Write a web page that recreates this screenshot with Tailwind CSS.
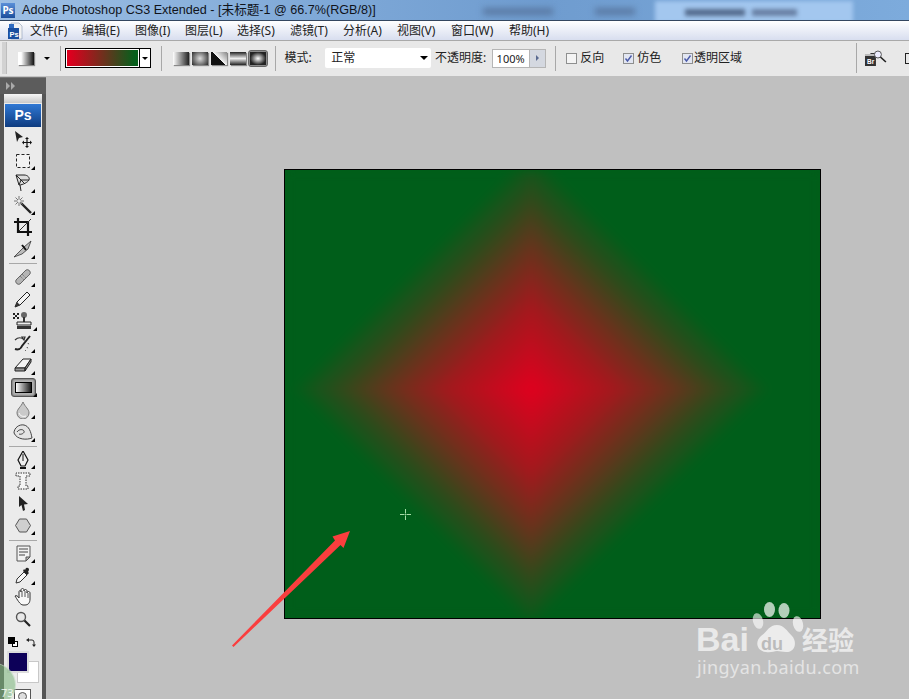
<!DOCTYPE html>
<html lang="zh">
<head>
  <meta charset="UTF-8">
  <title>Adobe Photoshop CS3 Extended</title>
  <script src="https://cdn.jsdelivr.net/npm/@tailwindcss/browser@4"></script>
</head>
<body class="relative w-[909px] h-[699px] overflow-hidden bg-[#c0c0c0] font-['Noto_Sans','Noto_Sans_CJK_SC',sans-serif] text-[12px] text-[#222]">

  <!-- title bar -->
  <div class="relative h-[20px] overflow-hidden bg-[linear-gradient(90deg,#9dbfe4,#7fa9d8_35%,#6f9ccf_60%,#7dabdc)] flex items-center">
    <div class="absolute left-[655px] top-[1px] w-[198px] h-[22px] bg-[#a3c7ef] blur-[2px]"></div>
    <div class="absolute left-[483px] top-[8px] w-[70px] h-[7px] bg-[#5a7aa4] blur-[3px]"></div>
    <div class="absolute left-[595px] top-[8px] w-[40px] h-[7px] bg-[#5a7aa4] blur-[3px]"></div>
    <div class="absolute left-[685px] top-[9px] w-[60px] h-[7px] bg-[#556c8e] blur-[2px]"></div>
    <div class="absolute left-[752px] top-[9px] w-[45px] h-[7px] bg-[#6880a4] blur-[2px]"></div>
    <div class="relative ml-[1px] w-[14px] h-[15px] bg-[linear-gradient(#5a8fd8,#1c4f9c)] text-white text-[10px] font-bold leading-[15px] text-center">Ps</div>
    <span class="relative ml-[7px] text-[12.6px] leading-[20px] text-[#10131a] whitespace-nowrap font-['Liberation_Sans','Noto_Sans_CJK_SC',sans-serif]">Adobe Photoshop CS3 Extended - [未标题-1 @ 66.7%(RGB/8)]</span>
  </div>

  <!-- menu bar -->
  <div class="h-[20px] pt-[1px] border-t border-[#33465f] bg-[linear-gradient(#ffffff,#f4f6fb_25%,#d8deef)] flex items-center">
    <svg class="ml-[6px] w-[18px] h-[18px]" viewBox="0 0 18 18">
      <path d="M5 1h8l3 3v13H5z" fill="#f2f2f2" stroke="#8a9ab5" stroke-width="0.6"/>
      <rect x="2" y="6" width="11" height="11" fill="#1b4fa0"/>
      <path d="M3 2h5v4H3z" fill="#2f6bc0"/>
      <text x="3.5" y="15" font-size="7.5" font-weight="700" fill="#fff" font-family="Liberation Sans">Ps</text>
    </svg>
    <nav class="ml-[6px] flex gap-[14px] text-[12px] whitespace-nowrap leading-[18px]">
      <span class="w-[38px]">文件(F)</span>
      <span class="w-[39px]">编辑(E)</span>
      <span class="w-[36px]">图像(I)</span>
      <span class="w-[38px]">图层(L)</span>
      <span class="w-[39px]">选择(S)</span>
      <span class="w-[39px]">滤镜(T)</span>
      <span class="w-[40px]">分析(A)</span>
      <span class="w-[40px]">视图(V)</span>
      <span class="w-[44px]">窗口(W)</span>
      <span class="w-[40px]">帮助(H)</span>
    </nav>
  </div>

  <!-- options bar -->
  <div class="relative h-[36px] pb-[1px] border-t border-[#a9a9a9] bg-[#e8e8e8] flex items-center overflow-hidden">
    <div class="ml-[2px] w-[5px] h-[32px] bg-[#d2d2d2] border-r border-[#bdbdbd]"></div>
    <div class="ml-[11px] w-[16px] h-[13px] bg-[linear-gradient(90deg,#fff,#fff_20%,#111)] shadow-[1px_1px_1px_#888]"></div>
    <div class="ml-[10px] w-0 h-0 border-x-[3px] border-x-transparent border-t-[3px] border-t-black"></div>
    <div class="ml-[10px] w-px h-[25px] bg-[#a8a8a8]"></div>

    <div class="ml-[4px] w-[86px] h-[20px] border border-black bg-white flex">
      <div class="m-px w-[71px] bg-[linear-gradient(90deg,#dc001e_5%,#065f1c_95%)]"></div>
      <div class="flex-1 border-l border-black flex items-center justify-center">
        <div class="w-0 h-0 border-x-[3px] border-x-transparent border-t-[3px] border-t-black"></div>
      </div>
    </div>
    <div class="ml-[10px] w-px h-[25px] bg-[#a8a8a8]"></div>

    <div class="ml-[11px] flex items-center gap-[3px]">
      <div class="w-[16px] h-[13px] bg-[linear-gradient(90deg,#fff,#222)] shadow-[1px_1px_1px_#888]"></div>
      <div class="w-[16px] h-[13px] bg-[radial-gradient(circle,#ddd,#2a2a2a)] shadow-[1px_1px_1px_#888]"></div>
      <div class="w-[16px] h-[13px] bg-[linear-gradient(45deg,#111_50%,#f4f4f4_50%,#888)] shadow-[1px_1px_1px_#888]"></div>
      <div class="w-[16px] h-[13px] bg-[linear-gradient(#222,#eee_50%,#222)] shadow-[1px_1px_1px_#888]"></div>
      <div class="ml-[-1px] w-[20px] h-[17px] rounded-[3px] border border-[#666] bg-[#8c8c8c] p-[1px]">
        <div class="w-full h-full bg-[radial-gradient(ellipse,#fff,#222_70%)]"></div>
      </div>
    </div>
    <div class="ml-[7px] w-px h-[25px] bg-[#a8a8a8]"></div>

    <span class="ml-[9px] w-[41px]">模式:</span>
    <div class="w-[106px] h-[20px] bg-white flex items-center justify-between pl-[6px] pr-[3px] rounded-[2px] leading-[20px]">
      <span>正常</span>
      <div class="w-0 h-0 border-x-[4px] border-x-transparent border-t-[4px] border-t-black"></div>
    </div>
    <span class="ml-[4px] w-[57px] whitespace-nowrap">不透明度:</span>
    <div class="w-[39px] h-[19px] bg-white border border-[#b5b5b5] text-[11px] leading-[18px] pl-[4px] whitespace-nowrap">100%</div>
    <div class="w-[16px] h-[19px] bg-[#d4d8e0] border border-[#b5b5b5] border-l-0 flex items-center justify-center">
      <div class="w-0 h-0 border-y-[3px] border-y-transparent border-l-[3px] border-l-[#5a6a90]"></div>
    </div>
    <div class="ml-[9px] w-px h-[25px] bg-[#a8a8a8]"></div>

    <div class="ml-[10px] w-[11px] h-[11px] border border-[#8e8f8f] bg-[#f4f4f4]"></div>
    <span class="ml-[3px] w-[43px]">反向</span>
    <div class="w-[11px] h-[11px] border border-[#8e8f8f] bg-[#e2e6f2] flex items-center justify-center">
      <svg class="w-[9px] h-[9px]" viewBox="0 0 9 9"><path d="M1.5 4.5L3.5 7L7.5 1.5" fill="none" stroke="#4a5aa8" stroke-width="1.4"/></svg>
    </div>
    <span class="ml-[3px] w-[45px]">仿色</span>
    <div class="w-[11px] h-[11px] border border-[#8e8f8f] bg-[#e2e6f2] flex items-center justify-center">
      <svg class="w-[9px] h-[9px]" viewBox="0 0 9 9"><path d="M1.5 4.5L3.5 7L7.5 1.5" fill="none" stroke="#4a5aa8" stroke-width="1.4"/></svg>
    </div>
    <span class="ml-[1px] w-[163px]">透明区域</span>
    <div class="w-px h-[30px] bg-[#a8a8a8]"></div>

    <svg class="ml-[7px] w-[23px] h-[17px]" viewBox="0 0 23 17">
      <path d="M1 4h5l1-1h5v13H1z" fill="#333"/>
      <path d="M1 4h11v2H1z" fill="#bbb"/>
      <circle cx="14" cy="4.5" r="3.5" fill="#eef" stroke="#555"/>
      <path d="M16.5 7L22 12" stroke="#222" stroke-width="1.6"/>
      <text x="3" y="14" font-size="6.5" font-weight="700" fill="#fff" font-family="Liberation Sans">Br</text>
    </svg>
    <div class="ml-[18px] w-[4px] h-[11px] border-y border-l border-[#222]"></div>
  </div>

  <!-- work area -->
  <div class="flex h-[623px]">
    <!-- tools panel -->
    <aside class="w-[46px] h-full shrink-0 bg-[#555] border-t border-[#c4c4c4] flex flex-col">
      <div class="h-[17px] border-t border-[#777] bg-[#5c5c5c] flex items-center pl-[6px] gap-px">
        <div class="w-0 h-0 border-y-[4px] border-y-transparent border-l-[4px] border-l-[#aaa]"></div>
        <div class="w-0 h-0 border-y-[4px] border-y-transparent border-l-[4px] border-l-[#aaa]"></div>
      </div>
      <div class="ml-[4px] w-[38px] flex-1 bg-[#ebebeb] flex flex-col items-center overflow-hidden">
        <div class="w-full h-[9px] bg-[linear-gradient(#f6f6f6,#c9c9c9)]"></div>
        <div class="mt-px w-[36px] h-[23px] bg-[linear-gradient(#2f78d4,#0f3c80)] text-white text-[14px] font-bold leading-[23px] text-center font-['Liberation_Sans',sans-serif]">Ps</div>

        <div class="flex flex-col items-center w-full mt-[1px]">
          <!-- move -->
          <div class="relative w-full h-[22px] flex items-center justify-center">
            <svg class="w-[20px] h-[18px]" viewBox="0 0 20 18"><path d="M2 1l8 6-4 1-2 4z" fill="#222"/><path d="M14 8v9M10 12.500h8" stroke="#111" stroke-width="1.200"/><path d="M14 7l-2 2h4zM14 18l-2-2h4zM9 12.500l2-2v4zM19 12.500l-2-2v4z" fill="#111"/></svg>
          </div>
          <!-- marquee -->
          <div class="relative w-full h-[22px] flex items-center justify-center">
            <svg class="w-[18px] h-[18px]" viewBox="0 0 18 18"><rect x="2.500" y="2.500" width="13" height="13" fill="#f2f2f2" stroke="#222" stroke-dasharray="3 2"/></svg>
            <div class="absolute right-[7px] bottom-[2px] w-[4px] h-[4px] bg-black [clip-path:polygon(100%_0,100%_100%,0_100%)]"></div>
          </div>
          <!-- lasso -->
          <div class="relative w-full h-[22px] flex items-center justify-center">
            <svg class="w-[20px] h-[20px]" viewBox="0 0 20 20"><path d="M3 2h8c4 0 6 3 5 5s-6 5-10 5z" fill="#ddd" stroke="#222"/><path d="M3 2l5 5 8 0M6 12l2-5 4 4M7 12l1 6" fill="none" stroke="#222"/></svg>
            <div class="absolute right-[7px] bottom-[1px] w-[4px] h-[4px] bg-black [clip-path:polygon(100%_0,100%_100%,0_100%)]"></div>
          </div>
          <!-- wand -->
          <div class="relative w-full h-[22px] flex items-center justify-center">
            <svg class="w-[20px] h-[20px]" viewBox="0 0 20 20"><path d="M8 8l10 10" stroke="#222" stroke-width="2.400"/><path d="M6 1v10M1 6h10M2.500 2.500l7 7M9.500 2.500l-7 7" stroke="#777"/><circle cx="6" cy="6" r="1.500" fill="#eee"/></svg>
            <div class="absolute right-[7px] bottom-[1px] w-[4px] h-[4px] bg-black [clip-path:polygon(100%_0,100%_100%,0_100%)]"></div>
          </div>
          <!-- crop -->
          <div class="relative w-full h-[22px] flex items-center justify-center">
            <svg class="w-[18px] h-[18px]" viewBox="0 0 18 18"><path d="M4 0v14h14" fill="none" stroke="#111" stroke-width="2.200"/><path d="M0 4h14v14" fill="none" stroke="#111" stroke-width="2.200"/><path d="M5 13L17 1" stroke="#333"/></svg>
          </div>
          <!-- slice -->
          <div class="relative w-full h-[22px] flex items-center justify-center">
            <svg class="w-[20px] h-[18px]" viewBox="0 0 20 18"><path d="M1 17L11 7l7-6-3 8-6 5z" fill="#bbb" stroke="#333" stroke-width="0.800"/><path d="M9 5l4 5" stroke="#111" stroke-width="2"/></svg>
            <div class="absolute right-[7px] bottom-[1px] w-[4px] h-[4px] bg-black [clip-path:polygon(100%_0,100%_100%,0_100%)]"></div>
          </div>
          <div class="mt-[3px] mb-[2px] w-[28px] h-px bg-[#a8a8a8]"></div>

          <!-- healing -->
          <div class="relative w-full h-[22px] flex items-center justify-center">
            <svg class="w-[20px] h-[20px]" viewBox="0 0 20 20"><path d="M3 13L13 3a3 3 0 0 1 4 4L7 17a3 3 0 0 1-4-4z" fill="#b4b4b4" stroke="#666"/><path d="M7 9l4 4M9 7l4 4" stroke="#666" stroke-dasharray="1 1"/></svg>
            <div class="absolute right-[7px] bottom-[1px] w-[4px] h-[4px] bg-black [clip-path:polygon(100%_0,100%_100%,0_100%)]"></div>
          </div>
          <!-- brush -->
          <div class="relative w-full h-[22px] flex items-center justify-center">
            <svg class="w-[20px] h-[20px]" viewBox="0 0 20 20"><path d="M2 18l2-5L14 3l3 3L7 16z" fill="#f4f4f4" stroke="#222"/><path d="M2 18l2-5 3 3z" fill="#333"/></svg>
            <div class="absolute right-[7px] bottom-[1px] w-[4px] h-[4px] bg-black [clip-path:polygon(100%_0,100%_100%,0_100%)]"></div>
          </div>
          <!-- stamp -->
          <div class="relative w-full h-[22px] flex items-center justify-center">
            <svg class="w-[22px] h-[20px]" viewBox="0 0 22 20"><path d="M1 2h2v2H1zM5 2h2v2H5zM3 4h2v2H3zM1 6h2v2H1zM5 6h2v2H5z" fill="#222"/><circle cx="12" cy="4" r="3" fill="#666"/><path d="M11 6h2v5h-2z" fill="#333"/><path d="M5 11h14v3H5z" fill="#eee" stroke="#222"/><path d="M5 15h14v3H5z" fill="#333"/></svg>
            <div class="absolute right-[5px] bottom-[1px] w-[4px] h-[4px] bg-black [clip-path:polygon(100%_0,100%_100%,0_100%)]"></div>
          </div>
          <!-- history brush -->
          <div class="relative w-full h-[22px] flex items-center justify-center">
            <svg class="w-[20px] h-[20px]" viewBox="0 0 20 20"><path d="M2 16c3 1 6 0 7-3l8-10" fill="none" stroke="#222" stroke-width="2"/><path d="M2 7c3-3 7-3 9 0M11 7l1-3-3 0z" fill="none" stroke="#333" stroke-width="1.200"/><path d="M15 10l1 2M14 14l1 2M12 17l1 1" stroke="#333" stroke-dasharray="1 1"/></svg>
            <div class="absolute right-[7px] bottom-[1px] w-[4px] h-[4px] bg-black [clip-path:polygon(100%_0,100%_100%,0_100%)]"></div>
          </div>
          <!-- eraser -->
          <div class="relative w-full h-[22px] flex items-center justify-center">
            <svg class="w-[20px] h-[16px]" viewBox="0 0 20 16"><path d="M2 11L10 2h8l-6 9z" fill="#f5f5f5" stroke="#222"/><path d="M2 11h10v3H2zM12 11l6-9v3l-6 9z" fill="#999" stroke="#222"/></svg>
            <div class="absolute right-[7px] bottom-[1px] w-[4px] h-[4px] bg-black [clip-path:polygon(100%_0,100%_100%,0_100%)]"></div>
          </div>
          <!-- gradient selected -->
          <div class="relative w-full h-[22px] flex items-center justify-center">
            <div class="w-[25px] h-[19px] rounded-[3px] border border-[#555] bg-[#b0b0b0] shadow-[inset_0_0_2px_#333] p-[3px]">
              <div class="w-full h-full border border-black bg-[linear-gradient(90deg,#fff,#1a1a1a)]"></div>
            </div>
            <div class="absolute right-[5px] bottom-[1px] w-[4px] h-[4px] bg-black [clip-path:polygon(100%_0,100%_100%,0_100%)]"></div>
          </div>
          <!-- blur drop -->
          <div class="relative w-full h-[23px] flex items-center justify-center">
            <svg class="w-[14px] h-[18px]" viewBox="0 0 14 18"><path d="M7 1c2 5 6 7 6 11a6 6 0 0 1-12 0c0-4 4-6 6-11z" fill="#c9c9c9" stroke="#777"/><path d="M3 12c1 3 4 4 7 3" stroke="#fff" fill="none"/></svg>
            <div class="absolute right-[7px] bottom-[2px] w-[4px] h-[4px] bg-black [clip-path:polygon(100%_0,100%_100%,0_100%)]"></div>
          </div>
          <!-- smudge -->
          <div class="relative w-full h-[22px] flex items-center justify-center">
            <svg class="w-[20px] h-[18px]" viewBox="0 0 20 18"><path d="M1 10c0-5 5-9 10-8s7 7 8 13c-5 2-15 2-18-5z" fill="#e4e4e4" stroke="#444"/><path d="M4 9c2-3 6-3 7-1s-3 4-5 3" fill="none" stroke="#444"/></svg>
            <div class="absolute right-[7px] bottom-[1px] w-[4px] h-[4px] bg-black [clip-path:polygon(100%_0,100%_100%,0_100%)]"></div>
          </div>
          <div class="mt-[3px] mb-[2px] w-[28px] h-px bg-[#a8a8a8]"></div>

          <!-- pen -->
          <div class="relative w-full h-[21px] flex items-center justify-center">
            <svg class="w-[14px] h-[18px]" viewBox="0 0 14 18"><path d="M7 0l5 9-3 6H5L2 9z" fill="#eee" stroke="#111" stroke-width="1.200"/><path d="M7 3v7" stroke="#111"/><path d="M4 16h6v2H4z" fill="#111"/></svg>
            <div class="absolute right-[7px] bottom-[1px] w-[4px] h-[4px] bg-black [clip-path:polygon(100%_0,100%_100%,0_100%)]"></div>
          </div>
          <!-- type -->
          <div class="relative w-full h-[22px] flex items-center justify-center">
            <svg class="w-[16px] h-[18px]" viewBox="0 0 16 18"><path d="M1 4V1h14v3h-4v10h2v3H3v-3h2V4z" fill="#f4f4f4" stroke="#333" stroke-dasharray="1.500 1"/></svg>
            <div class="absolute right-[7px] bottom-[1px] w-[4px] h-[4px] bg-black [clip-path:polygon(100%_0,100%_100%,0_100%)]"></div>
          </div>
          <!-- path select -->
          <div class="relative w-full h-[22px] flex items-center justify-center">
            <svg class="w-[12px] h-[16px]" viewBox="0 0 12 16"><path d="M2 1l9 8-4 .5L8 15l-2 1-1.500-6L2 12z" fill="#222"/></svg>
            <div class="absolute right-[7px] bottom-[1px] w-[4px] h-[4px] bg-black [clip-path:polygon(100%_0,100%_100%,0_100%)]"></div>
          </div>
          <!-- shape -->
          <div class="relative w-full h-[22px] flex items-center justify-center">
            <svg class="w-[16px] h-[15px]" viewBox="0 0 16 15"><path d="M4.500 1h7l4 6.500-4 6.500h-7l-4-6.500z" fill="#cfcfcf" stroke="#555"/></svg>
            <div class="absolute right-[7px] bottom-[1px] w-[4px] h-[4px] bg-black [clip-path:polygon(100%_0,100%_100%,0_100%)]"></div>
          </div>
          <div class="mt-[4px] mb-[1px] w-[28px] h-px bg-[#a8a8a8]"></div>

          <!-- notes -->
          <div class="relative w-full h-[22px] flex items-center justify-center">
            <svg class="w-[15px] h-[17px]" viewBox="0 0 15 17"><path d="M1 1h13v11l-4 4H1z" fill="#f2f2f2" stroke="#555"/><path d="M3 4h9M3 7h9M3 10h6" stroke="#444"/><path d="M10 16v-4h4z" fill="#bbb" stroke="#555"/></svg>
            <div class="absolute right-[7px] bottom-[1px] w-[4px] h-[4px] bg-black [clip-path:polygon(100%_0,100%_100%,0_100%)]"></div>
          </div>
          <!-- eyedropper -->
          <div class="relative w-full h-[22px] flex items-center justify-center">
            <svg class="w-[16px] h-[18px]" viewBox="0 0 16 18"><path d="M1 17l1-4 7-7 3 3-7 7z" fill="#f6f6f6" stroke="#333"/><path d="M8 5l4 4 2-2-1-1 1-2a2 2 0 0 0-3-2l-1 2-1-1z" fill="#222"/></svg>
            <div class="absolute right-[7px] bottom-[1px] w-[4px] h-[4px] bg-black [clip-path:polygon(100%_0,100%_100%,0_100%)]"></div>
          </div>
          <!-- hand -->
          <div class="relative w-full h-[22px] flex items-center justify-center">
            <svg class="w-[18px] h-[18px]" viewBox="0 0 18 18"><path d="M1 8c1-1 3 0 4 2V4c0-2 2-2 2 0V2c0-2 3-2 3 0v1c0-2 3-2 3 0v2c0-2 3-2 3 0v6c0 4-2 6-5 6H9C6 17 3 11 1 8z" fill="#f8f8f8" stroke="#333"/><path d="M8 3v6M11 3v6M14 5v5" stroke="#555"/></svg>
          </div>
          <!-- zoom -->
          <div class="relative w-full h-[22px] flex items-center justify-center">
            <svg class="w-[16px] h-[16px]" viewBox="0 0 16 16"><circle cx="6" cy="6" r="4.500" fill="#e8e8e8" stroke="#555" stroke-width="1.400"/><path d="M9.500 9.500L15 15" stroke="#222" stroke-width="2.200"/></svg>
          </div>

          <!-- colours -->
          <div class="mt-[5px] w-full h-[14px] flex items-center pl-[4px] gap-[8px]">
            <div class="relative w-[10px] h-[10px]">
              <div class="absolute right-0 bottom-0 w-[6px] h-[6px] bg-white border border-black"></div>
              <div class="absolute left-0 top-0 w-[7px] h-[7px] bg-black"></div>
            </div>
            <svg class="w-[10px] h-[11px]" viewBox="0 0 10 11"><path d="M2 3h4a2 2 0 0 1 2 2v3" fill="none" stroke="#222"/><path d="M0 3l3-2v4zM8 10L6 7.500h4z" fill="#222"/></svg>
          </div>
        </div>
      </div>
    </aside>

    <!-- canvas area -->
    <main class="flex-1 pl-[238px] pt-[93px]">
      <div class="w-[537px] h-[450px] border border-black bg-[#005e1a] overflow-hidden">
        <div class="w-full h-full blur-[5px] grid grid-cols-[246px_289px] grid-rows-[219px_229px]">
          <div class="bg-[linear-gradient(315deg,#e0001e_0,#a2191d_60px,#68331c_100px,#304a1b_135px,#005e1a_170px)]"></div>
          <div class="bg-[linear-gradient(45deg,#e0001e_0,#a2191d_60px,#68331c_100px,#304a1b_135px,#005e1a_170px)]"></div>
          <div class="bg-[linear-gradient(225deg,#e0001e_0,#a2191d_60px,#68331c_100px,#304a1b_135px,#005e1a_170px)]"></div>
          <div class="bg-[linear-gradient(135deg,#e0001e_0,#a2191d_60px,#68331c_100px,#304a1b_135px,#005e1a_170px)]"></div>
        </div>
      </div>
    </main>
  </div>

  <!-- foreground / background swatches -->
  <div class="absolute left-[17px] top-[661px] w-[22px] h-[22px] bg-white border border-[#c8c8c8]"></div>
  <div class="absolute left-[7px] top-[651px] w-[22px] h-[22px] bg-[#0d0058] border-2 border-[#dcdcdc]"></div>
  <!-- quick mask, cut off by the bottom edge -->
  <div class="absolute left-[14px] top-[689px] w-[17px] h-[14px] border border-[#555] bg-white flex items-center justify-center">
    <div class="w-[9px] h-[9px] rounded-full border border-[#555] bg-[#ddd]"></div>
  </div>
  <!-- green badge in the corner -->
  <div class="absolute left-[-28px] top-[663px] w-[44px] h-[44px] rounded-full bg-[#78b478]/55 border border-white/40"></div>
  <span class="absolute left-[1px] top-[687px] text-[11px] leading-[12px] text-white/80">73</span>

  <!-- crosshair cursor -->
  <svg class="absolute left-[400px] top-[509px] w-[11px] h-[11px]" viewBox="0 0 11 11"><path d="M0 5.500h4M7 5.500h4M5.500 0v4M5.500 7v4M5 5h1v1H5z" stroke="#a6dca6" stroke-width="1" fill="none"/></svg>

  <!-- red arrow -->
  <svg class="absolute left-0 top-0 w-[909px] h-[699px] pointer-events-none" viewBox="0 0 909 699">
    <path d="M232 645.500L335 540.500L332.500 536.500L350 531L343.500 548L340.500 545L233.500 647z" fill="#fa3e3e"/>
  </svg>

  <!-- baidu watermark -->
  <svg class="absolute left-[750px] top-[600px] w-[60px] h-[60px]" viewBox="0 0 60 60">
    <ellipse cx="19.500" cy="9.500" rx="5.500" ry="7.500" fill="#fff" fill-opacity="0.7"/>
    <ellipse cx="34" cy="10.500" rx="5.500" ry="7.500" fill="#fff" fill-opacity="0.7"/>
    <ellipse cx="8" cy="21" rx="5" ry="8" fill="#fff" fill-opacity="0.6" transform="rotate(-15 8 21)"/>
    <ellipse cx="48" cy="24" rx="5" ry="8" fill="#fff" fill-opacity="0.65" transform="rotate(-15 48 24)"/>
    <path d="M27 25c7 0 10 6 15 11 5 5 4 16-6 16-4 0-6-1-9-1s-6 2-11 1C6 51 5 41 11 36c6-4 8-11 16-11z" fill="#ececec"/>
  </svg>
  <span class="absolute left-[696px] top-[622px] text-[34px] leading-[34px] font-bold text-[#e9e9e9] font-['Liberation_Sans',sans-serif]">Bai</span>
  <span class="absolute left-[761px] top-[635px] text-[18px] leading-[18px] font-bold text-[#bbb] font-['Liberation_Sans',sans-serif]">du</span>
  <span class="absolute left-[802px] top-[625px] text-[26px] leading-[30px] font-semibold text-[#e9e9e9] whitespace-nowrap">经验</span>
  <span class="absolute left-[697px] top-[657px] text-[18px] leading-[20px] text-[#e4e4e4] tracking-[0.4px] whitespace-nowrap">jingyan.baidu.com</span>
</body>
</html>
